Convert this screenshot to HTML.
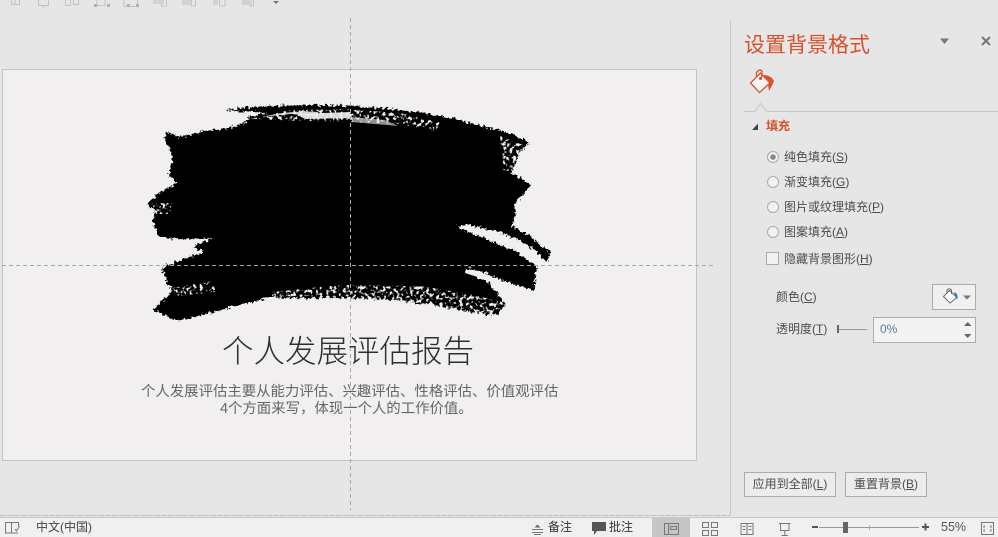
<!DOCTYPE html>
<html lang="zh"><head><meta charset="utf-8"><style>
html,body{margin:0;padding:0;background:#e6e6e6}
#p{position:relative;width:998px;height:537px;overflow:hidden;background:#e6e6e6;font-family:"Liberation Sans","Noto Sans CJK SC",sans-serif;font-size:12px;color:#4c4c4c}
.t{position:absolute;white-space:nowrap;line-height:16px}
.b{position:absolute;box-sizing:border-box;border:1px solid #ababab}
svg{position:absolute;left:0;top:0}
u{text-underline-offset:1px}
</style></head><body><div id="p">
<div style="position:absolute;left:2px;top:69px;width:693px;height:390px;background:#f1eff0;border:1px solid #c4c4c4"></div>
<div style="position:absolute;left:0;top:517px;width:998px;height:20px;background:#f1f0f0;border-top:1px solid #c8c8c8;box-sizing:border-box"></div>
<div style="position:absolute;left:652px;top:518px;width:38px;height:19px;background:#c6c6c6"></div>
<svg width="998" height="537" viewBox="0 0 998 537">
<defs>
<filter id="r" x="-5%" y="-5%" width="110%" height="110%" color-interpolation-filters="sRGB">
<feTurbulence type="fractalNoise" baseFrequency="0.35" numOctaves="3" seed="4" result="n"/>
<feDisplacementMap in="SourceGraphic" in2="n" scale="7" xChannelSelector="R" yChannelSelector="G" result="d"/>
<feComponentTransfer in="d"><feFuncA type="linear" slope="4" intercept="-1.4"/></feComponentTransfer>
</filter>
<filter id="s" x="-10%" y="-30%" width="120%" height="160%" color-interpolation-filters="sRGB">
<feTurbulence type="fractalNoise" baseFrequency="0.3" numOctaves="2" seed="9" result="n"/>
<feColorMatrix in="n" type="matrix" values="0 0 0 0 0 0 0 0 0 0 0 0 0 0 0 7 0 0 0 -3.6" result="m"/>
<feComposite in="SourceGraphic" in2="m" operator="in"/>
</filter>
</defs>
<g filter="url(#r)">
<path fill="#000" d="M224 110 L250 107 L273 106 L310 105 L350 106 L393 109 L425 113 L450 118 L478 125 L510 133 L530 143 L519 153 L515 165 L511 173 L520 178 L531 185 L522 195 L514 205 L516 213 L512 226 L530 236 L550 252 L547 263 L535 250 L520 241 L500 232 L470 225 L455 226 L483 238 L517 252 L537 267 L535 277 L534 290 L515 285 L490 275 L470 268 L465 271 L487 282 L497 292 L505 305 L497 315 L470 312 L450 308 L420 303 L393 300 L350 298 L307 298 L273 297 L240 305 L213 312 L177 321 L153 310 L165 298 L173 290 L167 283 L162 268 L175 262 L205 252 L193 247 L213 238 L190 239 L160 238 L152 220 L157 212 L147 205 L157 195 L178 182 L168 175 L173 158 L165 138 L167 132 L180 137 L205 131 L228 128 L247 122 L250 118 L247 116 L270 113 Z"/>
</g>
<g filter="url(#s)" fill="#f1eff0">
<path d="M250 119 L290 110 L340 109 L400 113 L440 122 L436 131 L400 124 L350 122 L300 121 Z"/>
<path d="M500 136 L526 146 L520 172 L503 170 Z"/>
<path d="M172 288 L212 281 L216 292 L178 296 Z"/>
<path d="M272 292 L340 285 L420 286 L470 294 L510 304 L505 322 L470 316 L430 308 L395 304 L350 302 L305 302 L272 301 Z"/>
<path d="M146 203 L172 203 L170 214 L156 214 Z"/>
</g>
<g fill="#f1eff0">
<path d="M262 117 Q290 110 318 112 L318 116 L290 114 Z" opacity=".85"/>
<path d="M296 114 L350 112 L350 118 L305 119 Z" opacity=".9"/>
<path d="M352 117 L385 120 L398 126 L352 122 Z" opacity=".6"/>
<path d="M458 226 L490 232 L520 246 L505 244 L480 235 Z"/>
<path d="M466 269 L488 281 L484 279 L465 273 Z"/>
</g>
<!-- guides -->
<line x1="350.5" y1="18" x2="350.5" y2="510" stroke="#a8a8a8" stroke-width="1" stroke-dasharray="4 3"/>
<line x1="2" y1="265.5" x2="713" y2="265.5" stroke="#a8a8a8" stroke-width="1" stroke-dasharray="4 3"/>
<!-- panel lines -->
<line x1="730.5" y1="20" x2="730.5" y2="515" stroke="#c8c8c8"/>
<line x1="0" y1="515.5" x2="730" y2="515.5" stroke="#bdbdbd" stroke-dasharray="6 1"/>
<path d="M744 111.5 H755 L760.5 103.5 L767 111.5 H998" fill="none" stroke="#c6c6c6"/>
<!-- top toolbar -->
<g fill="none" stroke="#c2c2c2">
<path d="M11.5 0V4.500H19.500V0M15 4.500V0"/>
<path d="M38.500 0V5.500H48.500V0M43.500 5.500V8"/>
<path d="M65.500 0V5.500H70.500V0M73.500 0V4.500H78.500V0"/>
<path d="M97 0V5.500H105V0"/><path d="M95 5.500H105.500"/>
<path d="M124 0V6.500H137.500V0"/>
<path d="M161.500 0V6H166.500V0" /><path d="M191.500 0V6H195.500V0"/><path d="M219.500 0V6H225V0"/><path d="M249 6H253.500V0"/>
</g>
<g fill="#d2d2d2"><rect x="153" y="0" width="11" height="4"/><rect x="182" y="0" width="9" height="5"/><rect x="213" y="0" width="5" height="5"/><rect x="242" y="0" width="10" height="5"/></g>
<g fill="#b0b0b0"><rect x="94" y="4" width="3" height="3"/><rect x="107" y="4" width="3" height="3"/><rect x="127" y="4" width="3" height="3"/><rect x="136" y="4" width="3" height="3"/></g>
<path d="M273 1H279L276 4Z" fill="#777"/>
<!-- pane controls -->
<path d="M940 38.500H949L944.500 44Z" fill="#777"/>
<path d="M982 37L990 45M990 37L982 45" stroke="#777" stroke-width="2" fill="none"/>
<!-- paint bucket -->
<path d="M763 75Q771 75 774 81Q772 86 769 91L768 84L769 81Z" fill="#d9502c"/>
<g fill="none" stroke="#d9502c" stroke-width="1.300">
<path d="M760.500 73L770 83L759.500 92.500L750.500 83Z" fill="#f8f5f4"/>
<path d="M756.500 76.500V72.500Q759 68.500 762 71L761.500 78"/>
</g>
<circle cx="760.500" cy="78.500" r="1.500" fill="#d9502c"/>
<path d="M752 130L758 130L758 123.500Z" fill="#444"/>
<!-- radios -->
<g fill="#f2f2f2" stroke="#aaa"><circle cx="773" cy="157" r="5.500"/><circle cx="773" cy="182" r="5.500"/><circle cx="773" cy="207" r="5.500"/><circle cx="773" cy="232" r="5.500"/></g>
<circle cx="773" cy="157" r="2.800" fill="#888"/>
<rect x="766.500" y="252.500" width="12" height="12" fill="#f2f2f2" stroke="#aaa"/>
<!-- slider -->
<rect x="837" y="325" width="2" height="8" fill="#666"/><line x1="839" y1="329.500" x2="867" y2="329.500" stroke="#999"/>
</svg>

<div class="t" style="left:744px;top:32px;font-size:21px;line-height:28px;color:#d9502c">设置背景格式</div>
<div class="t" style="left:766px;top:118px;color:#d9502c;font-weight:bold">填充</div>
<div class="t" style="left:784px;top:149px"><span>纯色填充(<u>S</u>)</span></div>
<div class="t" style="left:784px;top:174px">渐变填充(<u>G</u>)</div>
<div class="t" style="left:784px;top:199px">图片或纹理填充(<u>P</u>)</div>
<div class="t" style="left:784px;top:224px">图案填充(<u>A</u>)</div>
<div class="t" style="left:784px;top:251px">隐藏背景图形(<u>H</u>)</div>
<div class="t" style="left:776px;top:289px">颜色(<u>C</u>)</div>
<div class="t" style="left:776px;top:321px">透明度(<u>T</u>)</div>

<div class="b" style="left:932px;top:284px;width:44px;height:26px;background:#f0f0f0"></div>
<svg width="998" height="537" viewBox="0 0 998 537">
<path d="M949.500 290.500L957 297.500L950 303L943.500 296.500Z" fill="#fff" stroke="#666"/><path d="M947 293V290Q949 287.500 951.500 290V294" fill="none" stroke="#666"/><path d="M954 292Q958 293 957.500 299L955.500 297.500Z" fill="#2f75b5"/>
<path d="M963 295.500H971L967 299.500Z" fill="#777"/>
</svg>
<div class="b" style="left:873px;top:317px;width:103px;height:26px;background:#f3f3f3"></div>
<div class="t" style="left:880px;top:321px;color:#5b7a9a">0%</div>
<svg width="998" height="537" viewBox="0 0 998 537">
<path d="M964 326H971.500L967.700 322Z" fill="#666"/><path d="M964 334H971.500L967.700 338Z" fill="#666"/>
</svg>
<div class="b" style="left:744px;top:472px;width:92px;height:25px;text-align:center;line-height:22px;background:#ececec">应用到全部(<u>L</u>)</div>
<div class="b" style="left:845px;top:472px;width:82px;height:25px;text-align:center;line-height:22px;background:#ececec">重置背景(<u>B</u>)</div>

<div class="t" style="left:222px;top:329px;font-size:31.500px;line-height:44px;font-weight:300;color:#2e2e2e">个人发展评估报告</div>
<div class="t" style="left:141px;top:383px;font-size:14.400px;line-height:18px;color:#666">个人发展评估主要从能力评估、兴趣评估、性格评估、价值观评估</div>
<div class="t" style="left:220px;top:400px;font-size:14.400px;line-height:18px;color:#666">4个方面来写&#xFF0C;体现一个人的工作价值。</div>

<!-- status bar -->
<div class="t" style="left:36px;top:519px;color:#444">中文(中国)</div>
<div class="t" style="left:548px;top:519px;color:#333">备注</div>
<div class="t" style="left:609px;top:519px;color:#333">批注</div>
<div class="t" style="left:941px;top:519px;font-size:12.500px;color:#555">55%</div>
<svg width="998" height="537" viewBox="0 0 998 537">
<g fill="none" stroke="#777">
<path d="M5.500 522.500H11.500V533H5.500ZM11.500 522.500H18.500V526M11.500 533H18M15 529L16.500 531L19.500 526"/>
<path d="M532 529.500H543M532 532.500H543M534 534.500H541"/>
<path d="M664.500 523.500H678.500V534.500H664.500ZM668.500 523.500V534.500M670.500 526.500H676.500V529.500H670.500Z"/>
<path d="M702.500 522.500H708.500V527.500H702.500ZM711.500 522.500H717.500V527.500H711.500ZM702.500 530.500H708.500V535.500H702.500ZM711.500 530.500H717.500V535.500H711.500Z"/>
<path d="M741 523.500H753V534.500H741ZM747 523.500V534.500M742.500 526.500H745.500M742.500 529.500H745.500M748.500 526.500H751.500M748.500 529.500H751.500"/>
<path d="M779 523.500H790.500M780.500 523.500V530.500H789V523.500M784.800 530.500V535M781.500 535.500H788"/>
<path d="M981.500 522.500H993.500V534.500H981.500ZM985 526H984V528M990 526H991V528M985 531H984V529M990 531H991V529"/>
</g>
<path d="M537.500 524.500L534.500 527.500H540.500Z" fill="#666"/>
<path d="M592 522H606V531H597L594 535V531H592Z" fill="#555"/>
<rect x="812" y="526" width="6" height="2" fill="#555"/>
<line x1="819" y1="527.500" x2="919" y2="527.500" stroke="#999"/>
<line x1="869.500" y1="525" x2="869.500" y2="530" stroke="#aaa"/>
<rect x="843" y="522" width="5" height="11" fill="#666"/>
<path d="M922 527H929M925.500 523.500V530.500" stroke="#555" stroke-width="2" fill="none"/>
</svg>
</div></body></html>
